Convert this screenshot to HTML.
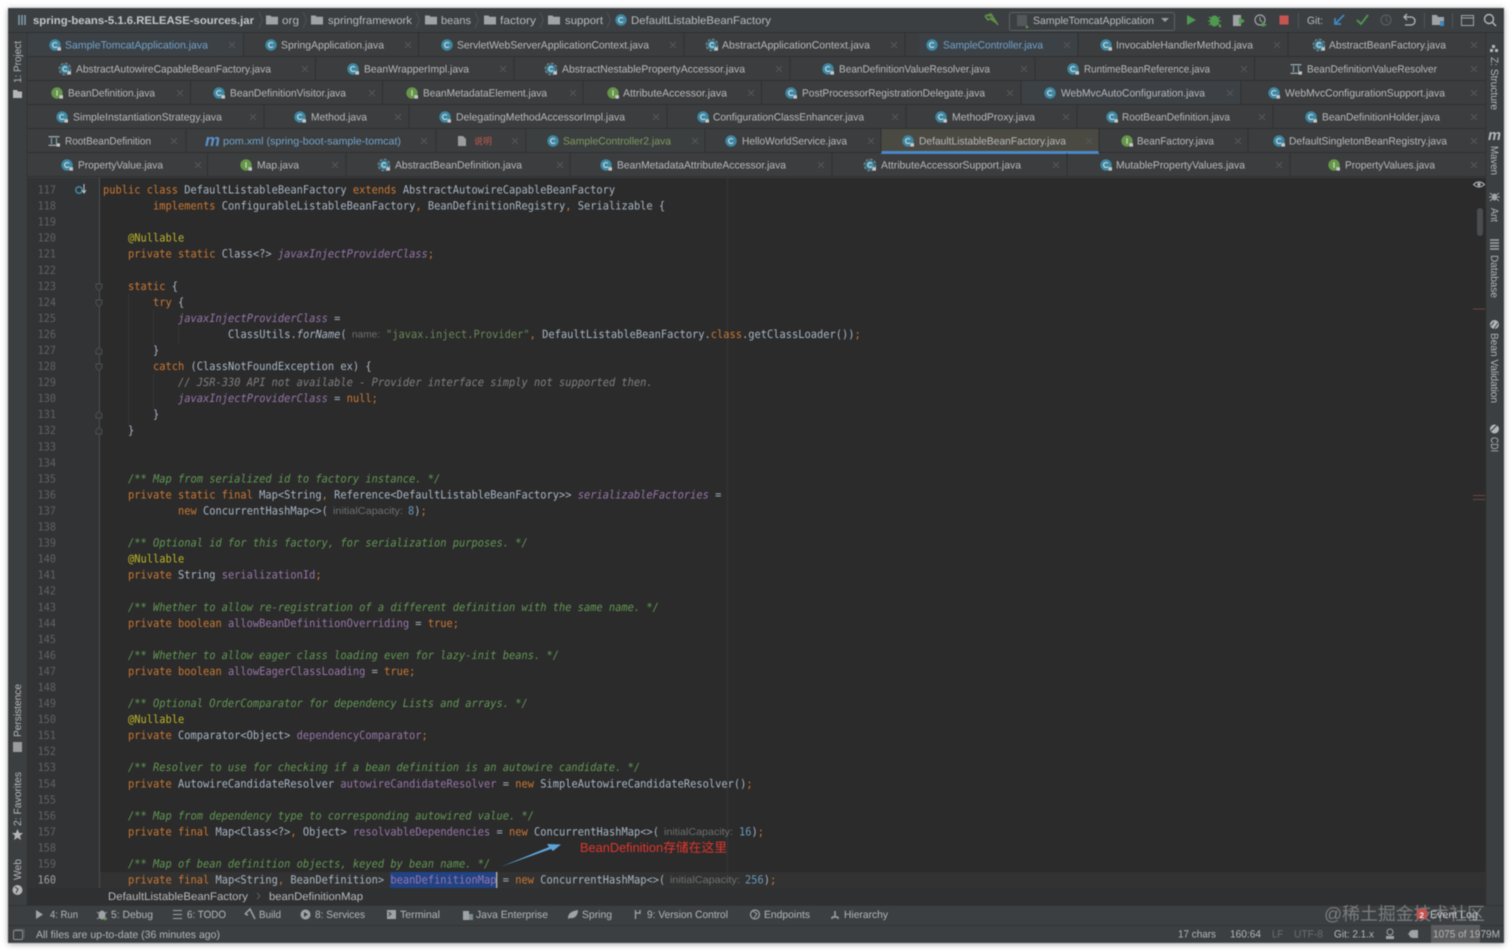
<!DOCTYPE html>
<html><head><meta charset="utf-8"><title>IDE</title>
<style>
html,body{margin:0;padding:0;background:#fff;width:1512px;height:951px;overflow:hidden}
#w{position:absolute;left:8px;top:8px;width:1496px;height:935px;box-shadow:0 1px 6px rgba(0,0,0,.35)}
svg{position:absolute;left:0;top:0;filter:blur(.4px)}
text{font-family:"Liberation Sans","Noto Sans CJK SC",sans-serif;font-size:10.5px;fill:#b8babc;text-rendering:geometricPrecision}
.b{fill:#72a3c9}.g{fill:#7d9a5e}.r{fill:#c0584f}
.m text{font-family:"DejaVu Sans Mono",monospace;font-size:11.35px;fill:#a9b7c6;transform-box:fill-box;transform-origin:0 50%;transform:scaleX(.9145)}
.n text{font-family:"DejaVu Sans Mono",monospace;font-size:11.2px;fill:#606366;text-anchor:end;transform-box:fill-box;transform-origin:100% 50%;transform:scaleX(.91)}
.k{fill:#cc7832}.f{fill:#9876aa}.fi{fill:#9876aa;font-style:italic}.j{fill:#629755;font-style:italic}.c{fill:#808080;font-style:italic}.s{fill:#6a8759}.u{fill:#6897bb}.it{font-style:italic}
.m text.h{font-family:"Liberation Sans",sans-serif;font-size:10px;fill:#6e7072;transform:none}
.l text{font-size:10.5px;fill:#b4b6b8}
</style></head><body><div id="w"></div>
<svg width="1512" height="951" viewBox="0 0 1512 951" xmlns="http://www.w3.org/2000/svg">
<defs>
<g id="c"><circle r="5.7" fill="#3f87a2"/><path d="M2-1.6A2.5 2.5 0 1 0 2 1.6" fill="none" stroke="#c9dde5" stroke-width="1.1"/><rect x="2.4" y="2.2" width="3.6" height="3.4" fill="#c8c8c8"/></g>
<g id="d"><circle r="5.7" fill="#3f87a2"/><path d="M2-1.6A2.5 2.5 0 1 0 2 1.6" fill="none" stroke="#c9dde5" stroke-width="1.1"/></g>
<g id="e"><circle r="4.6" fill="#3f87a2"/><circle r="5.8" fill="none" stroke="#7f9aa6" stroke-width="1" stroke-dasharray="3 1.5"/><path d="M1.8-1.4A2.2 2.2 0 1 0 1.8 1.4" fill="none" stroke="#c9dde5" stroke-width="1.1"/><rect x="2.4" y="2.2" width="3.6" height="3.4" fill="#c8c8c8"/></g>
<g id="i"><circle r="5.7" fill="#66964a"/><path d="M0-2.8V2.8" stroke="#cfe0c4" stroke-width="1.2"/><rect x="2.4" y="2.2" width="3.6" height="3.4" fill="#c8c8c8"/></g>
<g id="t"><path d="M-5.5-5H5.5V-3.6H-5.5ZM-5.5 3.6H5.5V5H-5.5Z" fill="#9aa0a3"/><path d="M-2.5-3V3M2.5-3V3" stroke="#7fa3b5" stroke-width="1.2"/><rect x="2.6" y="2.4" width="3.4" height="3.2" fill="#c8c8c8"/></g>
<path id="x" d="M-3-3L3 3M3-3L-3 3" stroke="#55585a" stroke-width="1" fill="none"/>
<path id="fo" d="M-6-4.5H-1.5L-.5-3.2H6V4.5H-6Z" fill="#a0a3a5"/>
<path id="ch" d="M0-8L3.5 0L0 8" stroke="#4e5254" fill="none"/>
<g id="fm"><path d="M-3-3H3V1L0 3.5L-3 1Z" fill="#313335" stroke="#4e5052" stroke-width=".9"/></g>
</defs>

<rect x="8" y="8" width="1496" height="935" fill="#3c3f41"/>
<!-- tab background -->
<rect x="27" y="33" width="1459" height="145" fill="#3b3d3e"/>
<rect x="27" y="33" width="216" height="24" fill="#3c4146"/>
<rect x="919" y="33" width="159" height="24" fill="#3c4146"/>
<rect x="1021" y="81" width="220" height="24" fill="#3c4146"/>
<rect x="526" y="129" width="179" height="24" fill="#3c3f40"/>
<rect x="881" y="129" width="218" height="24" fill="#4a4a42"/>
<path d="M8 32.500H1504M27 56.500H1486M27 80.500H1486M27 104.500H1486M27 128.500H1486M27 152.500H1486M27 176.500H1486" stroke="#2f3031" fill="none"/>
<rect x="881" y="151" width="218" height="3" fill="#4a88c7"/>

<!-- title bar -->
<path d="M19 15V25M22 15V25M25 15V25" stroke="#7d9aa8" stroke-width="1.6"/>
<text x="33" y="24" textLength="221" lengthAdjust="spacingAndGlyphs" style="font-weight:bold;font-size:11px;fill:#c4c6c8">spring-beans-5.1.6.RELEASE-sources.jar</text>
<use href="#ch" x="259" y="20"/><use href="#fo" x="272" y="20"/><text x="282" y="24" textLength="17" lengthAdjust="spacingAndGlyphs" style="font-size:11px">org</text>
<use href="#ch" x="303" y="20"/><use href="#fo" x="317" y="20"/><text x="328" y="24" textLength="84" lengthAdjust="spacingAndGlyphs" style="font-size:11px">springframework</text>
<use href="#ch" x="416" y="20"/><use href="#fo" x="431" y="20"/><text x="441" y="24" textLength="30" lengthAdjust="spacingAndGlyphs" style="font-size:11px">beans</text>
<use href="#ch" x="475" y="20"/><use href="#fo" x="490" y="20"/><text x="500" y="24" textLength="36" lengthAdjust="spacingAndGlyphs" style="font-size:11px">factory</text>
<use href="#ch" x="540" y="20"/><use href="#fo" x="554" y="20"/><text x="565" y="24" textLength="38" lengthAdjust="spacingAndGlyphs" style="font-size:11px">support</text>
<use href="#ch" x="607" y="20"/><use href="#d" x="621" y="20"/><text x="631" y="24" textLength="140" lengthAdjust="spacingAndGlyphs" style="font-size:11px">DefaultListableBeanFactory</text>
<path d="M985 16L991 14L998 25M985 16L988 20L993 17" fill="#5f8c4a" stroke="#5f8c4a" stroke-width="1.6"/>
<rect x="1009.500" y="12.500" width="165" height="18" rx="2" fill="#3c3f41" stroke="#5e6163"/>
<rect x="1017" y="15" width="10" height="11" fill="#55585a"/><circle cx="1027" cy="27" r="1.3" fill="#5f9a45"/>
<text x="1033" y="24" textLength="121" lengthAdjust="spacingAndGlyphs">SampleTomcatApplication</text>
<path d="M1161 18H1169L1165 22Z" fill="#9a9c9e"/>
<path d="M1187 15V25L1196 20Z" fill="#4f9a50"/>
<ellipse cx="1214.500" cy="21" rx="4.500" ry="5.500" fill="#4f9a50"/><path d="M1209 17L1220 25M1220 17L1209 25M1208 21H1221" stroke="#4f9a50" stroke-width="1.200"/><circle cx="1220" cy="26" r="1.300" fill="#5f9a45"/>
<path d="M1233 15H1241V26H1233Z" fill="#a0a3a5"/><path d="M1239 17L1245 21L1239 25Z" fill="#4f9a50"/>
<circle cx="1260" cy="20" r="5" fill="none" stroke="#a0a3a5" stroke-width="1.200"/><path d="M1260 17V20L1262 22" stroke="#a0a3a5" fill="none"/><path d="M1262 22L1267 25L1262 27Z" fill="#4f9a50"/>
<rect x="1279.500" y="15.500" width="9" height="9" fill="#c75450"/>
<path d="M1298.500 13V28" stroke="#515456"/>
<text x="1307" y="24" textLength="16" lengthAdjust="spacingAndGlyphs">Git:</text>
<path d="M1344 15L1335 24M1335 18V24H1341" fill="none" stroke="#3f87c2" stroke-width="1.800"/>
<path d="M1357 20L1361 24L1368 15" fill="none" stroke="#4f9a50" stroke-width="1.800"/>
<circle cx="1386" cy="20" r="5" fill="none" stroke="#595c5e" stroke-width="1.200"/><path d="M1386 17V20L1388 22" stroke="#595c5e" fill="none"/>
<path d="M1404 17H1411A3.800 3.800 0 0 1 1411 25H1405M1407 14L1404 17L1407 20" fill="none" stroke="#b4b6b8" stroke-width="1.300"/>
<path d="M1424.500 13V28" stroke="#515456"/>
<path d="M1432 15H1437L1438 17H1444V25H1432Z" fill="#a0a3a5"/><rect x="1440" y="21" width="4" height="5" fill="#3f87c2"/>
<path d="M1452.500 13V28" stroke="#515456"/>
<rect x="1461.500" y="15.500" width="12" height="10" fill="none" stroke="#a0a3a5"/><path d="M1461 18H1474" stroke="#a0a3a5"/>
<circle cx="1489" cy="19" r="4.500" fill="none" stroke="#b4b6b8" stroke-width="1.400"/><path d="M1492 22L1496 26" stroke="#b4b6b8" stroke-width="1.500"/>

<!-- tabs row 1 -->
<g transform="translate(0,45)">
<use href="#c" x="55"/><text x="65" y="3.700" class="b" textLength="143" lengthAdjust="spacingAndGlyphs">SampleTomcatApplication.java</text><use href="#x" x="232"/><path d="M243.500-12V12" stroke="#2f3031"/>
<use href="#d" x="271"/><text x="281" y="3.700" textLength="103" lengthAdjust="spacingAndGlyphs">SpringApplication.java</text><use href="#x" x="408"/><path d="M418.500-12V12" stroke="#2f3031"/>
<use href="#d" x="447"/><text x="457" y="3.700" textLength="192" lengthAdjust="spacingAndGlyphs">ServletWebServerApplicationContext.java</text><use href="#x" x="673"/><path d="M684-12V12" stroke="#2f3031"/>
<use href="#e" x="712"/><text x="722" y="3.700" textLength="148" lengthAdjust="spacingAndGlyphs">AbstractApplicationContext.java</text><use href="#x" x="894"/><path d="M905-12V12" stroke="#2f3031"/>
<use href="#d" x="932"/><text x="943" y="3.700" class="b" textLength="100" lengthAdjust="spacingAndGlyphs">SampleController.java</text><use href="#x" x="1067"/><path d="M1078-12V12" stroke="#2f3031"/>
<use href="#c" x="1106"/><text x="1116" y="3.700" textLength="137" lengthAdjust="spacingAndGlyphs">InvocableHandlerMethod.java</text><use href="#x" x="1277"/><path d="M1288-12V12" stroke="#2f3031"/>
<use href="#e" x="1319"/><text x="1329" y="3.700" textLength="117" lengthAdjust="spacingAndGlyphs">AbstractBeanFactory.java</text><use href="#x" x="1474"/>
</g>
<!-- row 2 -->
<g transform="translate(0,69)">
<use href="#e" x="65"/><text x="76" y="3.700" textLength="195" lengthAdjust="spacingAndGlyphs">AbstractAutowireCapableBeanFactory.java</text><use href="#x" x="305"/><path d="M315.500-12V12" stroke="#2f3031"/>
<use href="#c" x="353"/><text x="364" y="3.700" textLength="105" lengthAdjust="spacingAndGlyphs">BeanWrapperImpl.java</text><use href="#x" x="503"/><path d="M514-12V12" stroke="#2f3031"/>
<use href="#e" x="551"/><text x="562" y="3.700" textLength="183" lengthAdjust="spacingAndGlyphs">AbstractNestablePropertyAccessor.java</text><use href="#x" x="779"/><path d="M790-12V12" stroke="#2f3031"/>
<use href="#c" x="828"/><text x="839" y="3.700" textLength="151" lengthAdjust="spacingAndGlyphs">BeanDefinitionValueResolver.java</text><use href="#x" x="1024"/><path d="M1035-12V12" stroke="#2f3031"/>
<use href="#c" x="1073"/><text x="1084" y="3.700" textLength="126" lengthAdjust="spacingAndGlyphs">RuntimeBeanReference.java</text><use href="#x" x="1244"/><path d="M1254.500-12V12" stroke="#2f3031"/>
<use href="#t" x="1296"/><text x="1307" y="3.700" textLength="130" lengthAdjust="spacingAndGlyphs">BeanDefinitionValueResolver</text><use href="#x" x="1474"/>
</g>
<!-- row 3 -->
<g transform="translate(0,93)">
<use href="#i" x="57"/><text x="68" y="3.700" textLength="87" lengthAdjust="spacingAndGlyphs">BeanDefinition.java</text><use href="#x" x="180"/><path d="M190.500-12V12" stroke="#2f3031"/>
<use href="#c" x="219"/><text x="230" y="3.700" textLength="116" lengthAdjust="spacingAndGlyphs">BeanDefinitionVisitor.java</text><use href="#x" x="372"/><path d="M382.500-12V12" stroke="#2f3031"/>
<use href="#i" x="412"/><text x="423" y="3.700" textLength="124" lengthAdjust="spacingAndGlyphs">BeanMetadataElement.java</text><use href="#x" x="573"/><path d="M583-12V12" stroke="#2f3031"/>
<use href="#i" x="613"/><text x="623" y="3.700" textLength="104" lengthAdjust="spacingAndGlyphs">AttributeAccessor.java</text><use href="#x" x="751"/><path d="M761.500-12V12" stroke="#2f3031"/>
<use href="#c" x="791"/><text x="802" y="3.700" textLength="183" lengthAdjust="spacingAndGlyphs">PostProcessorRegistrationDelegate.java</text><use href="#x" x="1010"/><path d="M1021-12V12" stroke="#2f3031"/>
<use href="#d" x="1050"/><text x="1061" y="3.700" textLength="144" lengthAdjust="spacingAndGlyphs">WebMvcAutoConfiguration.java</text><use href="#x" x="1230"/><path d="M1241-12V12" stroke="#2f3031"/>
<use href="#c" x="1274"/><text x="1285" y="3.700" textLength="160" lengthAdjust="spacingAndGlyphs">WebMvcConfigurationSupport.java</text><use href="#x" x="1474"/>
</g>
<!-- row 4 -->
<g transform="translate(0,117)">
<use href="#c" x="62"/><text x="73" y="3.700" textLength="149" lengthAdjust="spacingAndGlyphs">SimpleInstantiationStrategy.java</text><use href="#x" x="253"/><path d="M264-12V12" stroke="#2f3031"/>
<use href="#c" x="300"/><text x="311" y="3.700" textLength="56" lengthAdjust="spacingAndGlyphs">Method.java</text><use href="#x" x="398"/><path d="M409-12V12" stroke="#2f3031"/>
<use href="#c" x="445"/><text x="456" y="3.700" textLength="169" lengthAdjust="spacingAndGlyphs">DelegatingMethodAccessorImpl.java</text><use href="#x" x="656"/><path d="M667-12V12" stroke="#2f3031"/>
<use href="#c" x="703"/><text x="713" y="3.700" textLength="151" lengthAdjust="spacingAndGlyphs">ConfigurationClassEnhancer.java</text><use href="#x" x="895"/><path d="M906-12V12" stroke="#2f3031"/>
<use href="#c" x="941"/><text x="952" y="3.700" textLength="83" lengthAdjust="spacingAndGlyphs">MethodProxy.java</text><use href="#x" x="1066"/><path d="M1077-12V12" stroke="#2f3031"/>
<use href="#c" x="1112"/><text x="1122" y="3.700" textLength="108" lengthAdjust="spacingAndGlyphs">RootBeanDefinition.java</text><use href="#x" x="1262"/><path d="M1273-12V12" stroke="#2f3031"/>
<use href="#c" x="1311"/><text x="1322" y="3.700" textLength="118" lengthAdjust="spacingAndGlyphs">BeanDefinitionHolder.java</text><use href="#x" x="1474"/>
</g>
<!-- row 5 -->
<g transform="translate(0,141)">
<use href="#t" x="54"/><text x="65" y="3.700" textLength="86" lengthAdjust="spacingAndGlyphs">RootBeanDefinition</text><use href="#x" x="174"/><path d="M186-12V12" stroke="#2f3031"/>
<text x="205" y="5" style="font-size:17px;font-style:italic;font-weight:bold;fill:#5b8fc7" textLength="15" lengthAdjust="spacingAndGlyphs">m</text><text x="223" y="3.700" class="b" textLength="178" lengthAdjust="spacingAndGlyphs">pom.xml (spring-boot-sample-tomcat)</text><use href="#x" x="424"/><path d="M436-12V12" stroke="#2f3031"/>
<path d="M458-5H463L466-2V5H458Z" fill="#9a9c9e"/><text x="474" y="3.700" class="r" textLength="18" lengthAdjust="spacingAndGlyphs" style="font-size:9.500px">说明</text><use href="#x" x="515"/><path d="M526-12V12" stroke="#2f3031"/>
<use href="#d" x="553"/><text x="563" y="3.700" class="g" textLength="108" lengthAdjust="spacingAndGlyphs">SampleController2.java</text><use href="#x" x="695"/><path d="M705-12V12" stroke="#2f3031"/>
<use href="#d" x="731"/><text x="742" y="3.700" textLength="105" lengthAdjust="spacingAndGlyphs">HelloWorldService.java</text><use href="#x" x="871"/><path d="M881-12V12" stroke="#2f3031"/>
<use href="#c" x="908"/><text x="919" y="3.700" textLength="147" lengthAdjust="spacingAndGlyphs">DefaultListableBeanFactory.java</text><use href="#x" x="1089"/><path d="M1099-12V12" stroke="#2f3031"/>
<use href="#i" x="1127"/><text x="1137" y="3.700" textLength="77" lengthAdjust="spacingAndGlyphs">BeanFactory.java</text><use href="#x" x="1238"/><path d="M1248-12V12" stroke="#2f3031"/>
<use href="#c" x="1279"/><text x="1289" y="3.700" textLength="158" lengthAdjust="spacingAndGlyphs">DefaultSingletonBeanRegistry.java</text><use href="#x" x="1474"/>
</g>
<!-- row 6 -->
<g transform="translate(0,165)">
<use href="#c" x="67"/><text x="78" y="3.700" textLength="85" lengthAdjust="spacingAndGlyphs">PropertyValue.java</text><use href="#x" x="198"/><path d="M207.500-12V12" stroke="#2f3031"/>
<use href="#i" x="246"/><text x="257" y="3.700" textLength="42" lengthAdjust="spacingAndGlyphs">Map.java</text><use href="#x" x="335"/><path d="M346-12V12" stroke="#2f3031"/>
<use href="#e" x="384"/><text x="395" y="3.700" textLength="127" lengthAdjust="spacingAndGlyphs">AbstractBeanDefinition.java</text><use href="#x" x="560"/><path d="M570-12V12" stroke="#2f3031"/>
<use href="#c" x="606"/><text x="617" y="3.700" textLength="169" lengthAdjust="spacingAndGlyphs">BeanMetadataAttributeAccessor.java</text><use href="#x" x="821"/><path d="M832-12V12" stroke="#2f3031"/>
<use href="#e" x="870"/><text x="881" y="3.700" textLength="140" lengthAdjust="spacingAndGlyphs">AttributeAccessorSupport.java</text><use href="#x" x="1056"/><path d="M1067-12V12" stroke="#2f3031"/>
<use href="#c" x="1106"/><text x="1116" y="3.700" textLength="129" lengthAdjust="spacingAndGlyphs">MutablePropertyValues.java</text><use href="#x" x="1279"/><path d="M1290-12V12" stroke="#2f3031"/>
<use href="#i" x="1334"/><text x="1345" y="3.700" textLength="90" lengthAdjust="spacingAndGlyphs">PropertyValues.java</text><use href="#x" x="1474"/>
</g>

<!-- editor -->
<rect x="27" y="178" width="1459" height="727" fill="#2b2b2b"/>
<rect x="27" y="178" width="72" height="710" fill="#313335"/>
<rect x="99" y="872" width="1387" height="16" fill="#323232"/>
<rect x="27" y="888" width="1459" height="17" fill="#2f3032"/>
<path d="M99.500 178V888" stroke="#4d4f51"/>
<path d="M727.500 178V888" stroke="#363636"/>
<path d="M128.500 294V424M153.500 310V344M153.500 374V408M178.500 326V344" stroke="#353535"/>
<rect x="390" y="872" width="106" height="16" fill="#214283"/>
<rect x="496" y="872" width="1.300" height="16" fill="#bbbbbb"/>

<!-- gutter numbers -->
<g class="n">
<text x="56" y="193.500">117</text><text x="56" y="209.600">118</text><text x="56" y="225.600">119</text><text x="56" y="241.700">120</text><text x="56" y="257.700">121</text><text x="56" y="273.800">122</text><text x="56" y="289.800">123</text><text x="56" y="305.900">124</text><text x="56" y="321.900">125</text><text x="56" y="338">126</text><text x="56" y="354">127</text><text x="56" y="370">128</text><text x="56" y="386.100">129</text><text x="56" y="402.100">130</text><text x="56" y="418.200">131</text><text x="56" y="434.200">132</text><text x="56" y="450.300">133</text><text x="56" y="466.300">134</text><text x="56" y="482.400">135</text><text x="56" y="498.400">136</text><text x="56" y="514.500">137</text><text x="56" y="530.500">138</text><text x="56" y="546.600">139</text><text x="56" y="562.600">140</text><text x="56" y="578.700">141</text><text x="56" y="594.700">142</text><text x="56" y="610.800">143</text><text x="56" y="626.800">144</text><text x="56" y="642.900">145</text><text x="56" y="658.900">146</text><text x="56" y="675">147</text><text x="56" y="691">148</text><text x="56" y="707">149</text><text x="56" y="723.100">150</text><text x="56" y="739.100">151</text><text x="56" y="755.200">152</text><text x="56" y="771.200">153</text><text x="56" y="787.300">154</text><text x="56" y="803.300">155</text><text x="56" y="819.400">156</text><text x="56" y="835.400">157</text><text x="56" y="851.500">158</text><text x="56" y="867.500">159</text><text x="56" y="883.600" style="fill:#a4a3a3">160</text>
</g>
<circle cx="79" cy="190" r="3.200" fill="none" stroke="#3f87a2" stroke-width="1.600"/><path d="M84 184V192M82 190L84 193L86 190" stroke="#c8c8c8" fill="none"/>
<use href="#fm" x="99" y="287"/><use href="#fm" x="99" y="303"/><use href="#fm" x="99" y="351" transform="rotate(180 99 351)"/><use href="#fm" x="99" y="367"/><use href="#fm" x="99" y="415" transform="rotate(180 99 415)"/><use href="#fm" x="99" y="431" transform="rotate(180 99 431)"/>

<!-- code -->
<g class="m">
<text x="103" y="193.500"><tspan class="k">public class </tspan>DefaultListableBeanFactory <tspan class="k">extends </tspan>AbstractAutowireCapableBeanFactory</text>
<text x="153" y="209.600"><tspan class="k">implements </tspan>ConfigurableListableBeanFactory<tspan class="k">, </tspan>BeanDefinitionRegistry<tspan class="k">, </tspan>Serializable {</text>
<text x="128" y="241.700" style="fill:#bbb529">@Nullable</text>
<text x="128" y="257.700"><tspan class="k">private static </tspan>Class&lt;?&gt; <tspan class="fi">javaxInjectProviderClass</tspan><tspan class="k">;</tspan></text>
<text x="128" y="289.800"><tspan class="k">static </tspan>{</text>
<text x="153" y="305.900"><tspan class="k">try </tspan>{</text>
<text x="178" y="321.900"><tspan class="fi">javaxInjectProviderClass</tspan> =</text>
<text x="228" y="338">ClassUtils.<tspan class="it">forName</tspan>(</text>
<text x="352" y="337.500" class="h" textLength="28" lengthAdjust="spacingAndGlyphs">name:</text>
<text x="386" y="338"><tspan class="s">"javax.inject.Provider"</tspan><tspan class="k">, </tspan>DefaultListableBeanFactory.<tspan class="k">class</tspan>.getClassLoader())<tspan class="k">;</tspan></text>
<text x="153" y="354">}</text>
<text x="153" y="370"><tspan class="k">catch </tspan>(ClassNotFoundException ex) {</text>
<text x="178" y="386.100"><tspan class="c">// JSR-330 API not available - Provider interface simply not supported then.</tspan></text>
<text x="178" y="402.100"><tspan class="fi">javaxInjectProviderClass</tspan> = <tspan class="k">null;</tspan></text>
<text x="153" y="418.200">}</text>
<text x="128" y="434.200">}</text>
<text x="128" y="482.400"><tspan class="j">/** Map from serialized id to factory instance. */</tspan></text>
<text x="128" y="498.400"><tspan class="k">private static final </tspan>Map&lt;String<tspan class="k">, </tspan>Reference&lt;DefaultListableBeanFactory&gt;&gt; <tspan class="fi">serializableFactories</tspan> =</text>
<text x="178" y="514.500"><tspan class="k">new </tspan>ConcurrentHashMap&lt;&gt;(</text>
<text x="333" y="514" class="h" textLength="70" lengthAdjust="spacingAndGlyphs">initialCapacity:</text>
<text x="408" y="514.500"><tspan class="u">8</tspan>)<tspan class="k">;</tspan></text>
<text x="128" y="546.600"><tspan class="j">/** Optional id for this factory, for serialization purposes. */</tspan></text>
<text x="128" y="562.600" style="fill:#bbb529">@Nullable</text>
<text x="128" y="578.700"><tspan class="k">private </tspan>String <tspan class="f">serializationId</tspan><tspan class="k">;</tspan></text>
<text x="128" y="610.800"><tspan class="j">/** Whether to allow re-registration of a different definition with the same name. */</tspan></text>
<text x="128" y="626.800"><tspan class="k">private boolean </tspan><tspan class="f">allowBeanDefinitionOverriding</tspan> = <tspan class="k">true;</tspan></text>
<text x="128" y="658.900"><tspan class="j">/** Whether to allow eager class loading even for lazy-init beans. */</tspan></text>
<text x="128" y="675"><tspan class="k">private boolean </tspan><tspan class="f">allowEagerClassLoading</tspan> = <tspan class="k">true;</tspan></text>
<text x="128" y="707"><tspan class="j">/** Optional OrderComparator for dependency Lists and arrays. */</tspan></text>
<text x="128" y="723.100" style="fill:#bbb529">@Nullable</text>
<text x="128" y="739.100"><tspan class="k">private </tspan>Comparator&lt;Object&gt; <tspan class="f">dependencyComparator</tspan><tspan class="k">;</tspan></text>
<text x="128" y="771.200"><tspan class="j">/** Resolver to use for checking if a bean definition is an autowire candidate. */</tspan></text>
<text x="128" y="787.300"><tspan class="k">private </tspan>AutowireCandidateResolver <tspan class="f">autowireCandidateResolver</tspan> = <tspan class="k">new </tspan>SimpleAutowireCandidateResolver()<tspan class="k">;</tspan></text>
<text x="128" y="819.400"><tspan class="j">/** Map from dependency type to corresponding autowired value. */</tspan></text>
<text x="128" y="835.400"><tspan class="k">private final </tspan>Map&lt;Class&lt;?&gt;<tspan class="k">, </tspan>Object&gt; <tspan class="f">resolvableDependencies</tspan> = <tspan class="k">new </tspan>ConcurrentHashMap&lt;&gt;(</text>
<text x="664" y="835" class="h" textLength="69" lengthAdjust="spacingAndGlyphs">initialCapacity:</text>
<text x="739" y="835.400"><tspan class="u">16</tspan>)<tspan class="k">;</tspan></text>
<text x="128" y="867.500"><tspan class="j">/** Map of bean definition objects, keyed by bean name. */</tspan></text>
<text x="128" y="883.600"><tspan class="k">private final </tspan>Map&lt;String<tspan class="k">, </tspan>BeanDefinition&gt; <tspan class="f">beanDefinitionMap</tspan> = <tspan class="k">new </tspan>ConcurrentHashMap&lt;&gt;(</text>
<text x="670" y="883" class="h" textLength="70" lengthAdjust="spacingAndGlyphs">initialCapacity:</text>
<text x="745" y="883.600"><tspan class="u">256</tspan>)<tspan class="k">;</tspan></text>
</g>

<!-- annotation -->
<path d="M500 867L549 847L547 844L561 844.500L553 851L551 849Z" fill="#5aa5d8"/>
<text x="580" y="852" textLength="147" lengthAdjust="spacingAndGlyphs" style="font-size:13px;fill:#e0362c">BeanDefinition存储在这里</text>

<!-- breadcrumb -->
<text x="108" y="900" textLength="140" lengthAdjust="spacingAndGlyphs" style="font-size:11px">DefaultListableBeanFactory</text>
<path d="M257 893L260 896L257 899" stroke="#5a5d5f" fill="none"/>
<text x="269" y="900" textLength="94" lengthAdjust="spacingAndGlyphs" style="font-size:11px">beanDefinitionMap</text>

<!-- right panel marks -->
<path d="M1473.500 184.500Q1479 179.500 1484.500 184.500Q1479 189.500 1473.500 184.500Z" fill="none" stroke="#b0b2b4" stroke-width="1.100"/><circle cx="1479" cy="184.500" r="1.600" fill="#b0b2b4"/>
<rect x="1477" y="208" width="6" height="28" rx="3" fill="#4a4c4e"/>
<path d="M1473 309H1485M1473 495.500H1485M1473 499.500H1485" stroke="#6b4740" stroke-width="1"/>

<!-- stripes -->
<rect x="8" y="33" width="19" height="872" fill="#3c3f41"/>
<rect x="1486" y="33" width="18" height="872" fill="#3c3f41"/>
<path d="M27 33V905M1486 33V905" stroke="#323334"/>
<g>
<text transform="translate(21,83) rotate(-90)" textLength="42" lengthAdjust="spacingAndGlyphs" style="font-size:10.500px;fill:#b4b6b8">1: Project</text>
<path d="M13 90H17L18 91.500H22V98H13Z" fill="#b4b6b8"/>
<text transform="translate(21,737) rotate(-90)" textLength="53" lengthAdjust="spacingAndGlyphs" style="font-size:10.500px;fill:#b4b6b8">Persistence</text>
<rect x="13" y="742" width="9" height="10" fill="#9a9c9e"/>
<text transform="translate(21,826) rotate(-90)" textLength="54" lengthAdjust="spacingAndGlyphs" style="font-size:10.500px;fill:#b4b6b8">2: Favorites</text>
<path d="M17.500 829L19.200 833H23L20 835.800L21 840L17.500 837.700L14 840L15 835.800L12 833H15.800Z" fill="#b4b6b8"/>
<text transform="translate(21,880) rotate(-90)" textLength="21" lengthAdjust="spacingAndGlyphs" style="font-size:10.500px;fill:#b4b6b8">Web</text>
<circle cx="17.500" cy="890" r="5" fill="#b4b6b8"/><path d="M15 887L18 889L16 893" stroke="#3c3f41" fill="none"/>

<path d="M1492 48H1495V51H1492ZM1490 52H1493V55H1490ZM1495 52H1498V55H1495Z" fill="#b4b6b8" transform="translate(0,-3)"/>
<text transform="translate(1491,57) rotate(90)" textLength="53" lengthAdjust="spacingAndGlyphs" style="font-size:10.500px;fill:#b4b6b8">Z: Structure</text>
<text x="1488" y="140" style="font-size:15px;font-style:italic;font-weight:bold;fill:#b4b6b8" textLength="13" lengthAdjust="spacingAndGlyphs">m</text>
<text transform="translate(1491,146) rotate(90)" textLength="29" lengthAdjust="spacingAndGlyphs" style="font-size:10.500px;fill:#b4b6b8">Maven</text>
<path d="M1490 193L1499 201M1499 193L1490 201M1489 197H1500" stroke="#a0a3a5" stroke-width="1.100"/><ellipse cx="1494.500" cy="197" rx="2.500" ry="3.500" fill="#a0a3a5"/>
<text transform="translate(1491,208) rotate(90)" textLength="14" lengthAdjust="spacingAndGlyphs" style="font-size:10.500px;fill:#b4b6b8">Ant</text>
<path d="M1490 240H1499M1490 243H1499M1490 246H1499M1490 249H1499" stroke="#a0a3a5" stroke-width="1.500"/>
<text transform="translate(1491,255) rotate(90)" textLength="43" lengthAdjust="spacingAndGlyphs" style="font-size:10.500px;fill:#b4b6b8">Database</text>
<circle cx="1494.500" cy="324.500" r="4.500" fill="#b4b6b8"/><path d="M1491 326L1494 322M1494 329L1498 323" stroke="#3c3f41" fill="none"/>
<text transform="translate(1491,333) rotate(90)" textLength="70" lengthAdjust="spacingAndGlyphs" style="font-size:10.500px;fill:#b4b6b8">Bean Validation</text>
<circle cx="1494.500" cy="429" r="4.500" fill="#b4b6b8"/><path d="M1491 431L1497 425" stroke="#3c3f41" stroke-width="1.200"/>
<text transform="translate(1491,437) rotate(90)" textLength="15" lengthAdjust="spacingAndGlyphs" style="font-size:10.500px;fill:#b4b6b8">CDI</text>
</g>

<!-- bottom tool bar -->
<rect x="8" y="905" width="1496" height="20" fill="#3c3f41"/>
<path d="M8 905.500H1504" stroke="#323334"/>
<g class="l">
<path d="M36 910V919L43 914.500Z" fill="#a0a3a5"/><text x="50" y="918" textLength="28" lengthAdjust="spacingAndGlyphs">4: Run</text>
<ellipse cx="102" cy="915" rx="3.500" ry="4.500" fill="#a0a3a5"/><path d="M97 912L107 919M107 912L97 919" stroke="#a0a3a5"/><circle cx="105" cy="919" r="1.300" fill="#5f9a45"/><text x="111" y="918" textLength="42" lengthAdjust="spacingAndGlyphs">5: Debug</text>
<path d="M173 910.500H182M173 914.500H182M173 918.500H182" stroke="#a0a3a5"/><text x="187" y="918" textLength="39" lengthAdjust="spacingAndGlyphs">6: TODO</text>
<path d="M245 914L250 909L255 919M245 914L248 915" stroke="#a0a3a5" stroke-width="1.500" fill="none"/><text x="259" y="918" textLength="22" lengthAdjust="spacingAndGlyphs">Build</text>
<circle cx="305.500" cy="914.500" r="5" fill="#a0a3a5"/><path d="M304 912V917L308 914.500Z" fill="#3c3f41"/><text x="315" y="918" textLength="50" lengthAdjust="spacingAndGlyphs">8: Services</text>
<rect x="387" y="910" width="9" height="9" fill="#a0a3a5"/><path d="M388.500 912L391 914L388.500 916" stroke="#3c3f41" fill="none"/><text x="400" y="918" textLength="40" lengthAdjust="spacingAndGlyphs">Terminal</text>
<rect x="463" y="911" width="6" height="9" fill="#a0a3a5"/><rect x="469" y="914" width="4" height="6" fill="#7d8a90"/><text x="476" y="918" textLength="72" lengthAdjust="spacingAndGlyphs">Java Enterprise</text>
<path d="M568 919C568 912 573 911 578 910C578 916 574 919 570 918Z" fill="#a0a3a5"/><text x="582" y="918" textLength="30" lengthAdjust="spacingAndGlyphs">Spring</text>
<path d="M635.500 910V919M635.500 913H640M640 910V914" stroke="#a0a3a5" stroke-width="1.300" fill="none"/><text x="647" y="918" textLength="81" lengthAdjust="spacingAndGlyphs">9: Version Control</text>
<circle cx="755" cy="914.500" r="4.500" fill="none" stroke="#a0a3a5" stroke-width="1.200"/><path d="M753 911L757 914L754 918" stroke="#a0a3a5" fill="none"/><text x="764" y="918" textLength="46" lengthAdjust="spacingAndGlyphs">Endpoints</text>
<path d="M832 917H838M835 911V914M832 917V919M838 917V919M835 914V917" stroke="#a0a3a5" stroke-width="1.500"/><text x="844" y="918" textLength="44" lengthAdjust="spacingAndGlyphs">Hierarchy</text>
</g>
<!-- status bar -->
<rect x="8" y="925" width="1496" height="18" fill="#3c3f41"/>
<path d="M8 925.500H1504" stroke="#323334"/>
<rect x="1431" y="925" width="49" height="18" fill="#5b5d5f"/>
<rect x="13.500" y="930.500" width="9" height="9" rx="1" fill="none" stroke="#8c8e90"/><path d="M15 929.500H24V938" fill="none" stroke="#5f6163"/>
<g class="l">
<text x="36" y="938" textLength="184" lengthAdjust="spacingAndGlyphs">All files are up-to-date (36 minutes ago)</text>
<text x="1178" y="937.500" textLength="38" lengthAdjust="spacingAndGlyphs">17 chars</text>
<text x="1230" y="937.500" textLength="31" lengthAdjust="spacingAndGlyphs">160:64</text>
<text x="1272" y="937.500" textLength="11" lengthAdjust="spacingAndGlyphs" style="fill:#6b6d6f">LF</text>
<text x="1294" y="937.500" textLength="29" lengthAdjust="spacingAndGlyphs" style="fill:#6b6d6f">UTF-8</text>
<text x="1334" y="937.500" textLength="40" lengthAdjust="spacingAndGlyphs">Git: 2.1.x</text>
<text x="1433" y="937.500" textLength="67" lengthAdjust="spacingAndGlyphs">1075 of 1979M</text>
</g>
<circle cx="1390" cy="932" r="3" fill="none" stroke="#a0a3a5"/><path d="M1386 939H1394V936H1386Z" fill="#a0a3a5"/>
<path d="M1413 930H1418V938H1413A4 4 0 0 1 1413 930Z" fill="#a0a3a5"/><path d="M1408 934H1411" stroke="#a0a3a5"/>

<!-- watermark & event log -->
<text x="1324" y="920" textLength="161" lengthAdjust="spacingAndGlyphs" style="font-size:18px;fill:#8f9193;fill-opacity:.75">@稀土掘金技术社区</text>
<rect x="1417" y="909" width="10" height="10" rx="2" fill="#c8504d"/>
<text x="1419.500" y="918" style="font-size:8px;font-weight:bold;fill:#eee">2</text>
<text x="1430" y="918" textLength="48" lengthAdjust="spacingAndGlyphs" style="font-size:10.500px;fill:#c8cacc">Event Log</text>
</svg>
</body></html>
